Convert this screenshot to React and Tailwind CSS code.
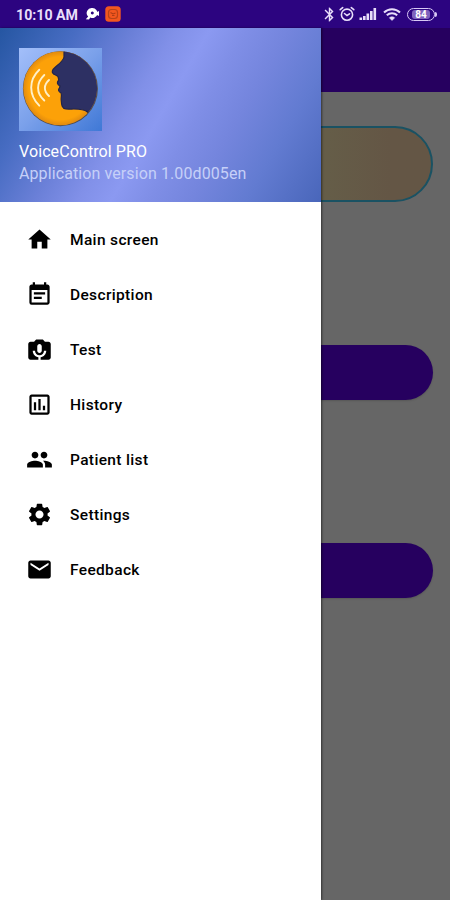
import {
  MdHome, MdEventNote, MdPermCameraMic, MdOutlineInsertChart,
  MdPeople, MdSettings, MdEmail, MdBluetooth
} from 'react-icons/md';

const navItems = [
  { name: 'Main screen', icon: MdHome },
  { name: 'Description', icon: MdEventNote },
  { name: 'Test', icon: MdPermCameraMic },
  { name: 'History', icon: MdOutlineInsertChart },
  { name: 'Patient list', icon: MdPeople },
  { name: 'Settings', icon: MdSettings },
  { name: 'Feedback', icon: MdEmail },
];

function AppLogo() {
  return (
    <svg className="block h-[83px] w-[83px]" viewBox="0 0 83 83">
      <defs>
        <linearGradient id="logoBg" x1="0" y1="0" x2="1" y2="1">
          <stop offset="0" stopColor="#a3bffa" />
          <stop offset="0.5" stopColor="#7aa0ea" />
          <stop offset="1" stopColor="#3f78d6" />
        </linearGradient>
        <radialGradient id="logoOrange">
          <stop offset="0.85" stopColor="#fca108" />
          <stop offset="1" stopColor="#e08a10" />
        </radialGradient>
        <clipPath id="logoClip">
          <circle cx="41.200" cy="40.300" r="37" />
        </clipPath>
      </defs>
      <rect width="83" height="83" fill="url(#logoBg)" />
      <circle cx="41.400" cy="40.700" r="37.500" fill="#4b4a50" />
      <circle cx="41.200" cy="40.300" r="37" fill="url(#logoOrange)" />
      <path
        clipPath="url(#logoClip)"
        fill="#2d3063"
        stroke="#22244a"
        strokeWidth="1.200"
        d="M45 2 L45 9 C44 14 38 17 34 21.500 C32.500 24 33.500 26 36.500 27 C39.500 28 40 30 39.500 32.500 C37.500 34.500 38.500 36.500 41 38 L40.500 40 C38.500 42 40 44 42 45 C43 47 42 49 42.200 52 C42.500 57 43 60.500 47 61 C53 61.500 63 59.500 68.500 64 L83 78 V0 Z"
      />
      <g fill="none" stroke="#fff0c8" strokeLinecap="round">
        <path strokeWidth="1.900" d="M20.300 21.700 C9.500 32 9.500 47 20.300 57.700" />
        <path strokeWidth="1.900" d="M25.300 27 C17 35 17 45 25.300 52.500" />
        <path strokeWidth="1.900" d="M30 32 C24.500 37 24.500 43 30 48" />
      </g>
    </svg>
  );
}

function StatusBar() {
  return (
    <div className="flex h-7 items-center justify-between bg-[#2c0480] pl-4 pr-[13px] text-[#e8defa]">
      <div className="flex items-center">
        <span className="w-[63px] whitespace-nowrap pt-px text-[14.200px] leading-7 font-bold">10:10 AM</span>
        <svg className="ml-[6px] h-[14px] w-[15px]" viewBox="0 0 15 14" fill="#ffffff">
          <path fillRule="evenodd" d="M7.500 1 a5 5 0 1 1 -2.200 9.500 L4 12.500 L0.800 12.300 L3.200 9.500 A5 5 0 0 1 7.500 1 Z M7.300 4.500 a1.500 1.500 0 1 0 0.010 0 Z" />
          <path d="M12 5 L14 4 V9 L12 8 Z" />
        </svg>
        <svg className="ml-[5px] h-4 w-4" viewBox="0 0 16 16" fill="none">
          <rect x="0.300" y="0.300" width="15.400" height="15.400" rx="3.500" fill="#f2571f" />
          <rect x="3.500" y="3.500" width="9" height="9" rx="3" stroke="#b84318" strokeWidth="1.200" />
          <path d="M5.500 6.500 L8 8 L10.500 7 M7 9.500 h2.500" stroke="#b03c14" strokeWidth="1.100" />
        </svg>
      </div>
      <div className="flex items-center">
        <MdBluetooth className="h-[17px] w-[17px]" />
        <svg className="ml-[1px] h-4 w-4" viewBox="0 0 16 16" fill="none" stroke="currentColor" strokeWidth="1.600" strokeLinecap="round">
          <circle cx="8" cy="8.700" r="5.600" />
          <path d="M1.200 3.700 L3.700 1.600 M14.800 3.700 L12.300 1.600" />
          <path d="M5.500 7.500 L8 9.500 L10.500 7.800" />
        </svg>
        <svg className="ml-[4px] h-[14px] w-[18px]" viewBox="0 0 18 14" fill="currentColor">
          <rect x="0.500" y="10.500" width="2.600" height="2.500" />
          <rect x="4" y="9" width="2.600" height="4" />
          <rect x="7.500" y="6.500" width="2.600" height="6.500" />
          <rect x="11" y="4" width="2.600" height="9" />
          <rect x="14.500" y="1" width="2.600" height="12" />
        </svg>
        <svg className="ml-[6px] h-[15px] w-[18px]" viewBox="0 0 18 15" fill="none" stroke="currentColor" strokeWidth="2">
          <path d="M1 5.500 C5.500 1.200 12.500 1.200 17 5.500" />
          <path d="M3.800 8.300 C6.800 5.500 11.200 5.500 14.200 8.300" />
          <path d="M6.300 10.800 C8 9.400 10 9.400 11.700 10.800 L9 13.500 Z" fill="currentColor" strokeWidth="0.500" />
        </svg>
        <div className="ml-[6px] flex h-[13px] w-[28px] items-center justify-center rounded-full border-[1.500px] border-[#d8c9f5]">
          <span className="rounded-[3px] bg-[#7f63bd] px-[3px] text-[10px] leading-[9px] font-bold text-white">84</span>
        </div>
        <div className="h-[5px] w-[2px] rounded-r bg-[#d8c9f5]" />
      </div>
    </div>
  );
}

export default function App() {
  return (
    <div className="relative flex h-[900px] w-[450px] flex-col overflow-hidden bg-[#666666] font-['Roboto',sans-serif]">
      <StatusBar />

      {/* Dimmed screen behind the drawer */}
      <div className="h-16 bg-[#26005f]" />
      <main className="flex flex-col pr-[17px] pl-4">
        <div className="mt-[34px] h-[76px] rounded-full border-2 border-[#1a5263] bg-linear-to-r from-[#655d48] from-75% to-[#645645] to-90%" />
        <div className="mt-[143.400px] h-[55px] rounded-full bg-[#26005f] shadow-[0_1px_2px_rgba(0,0,0,0.15)]" />
        <div className="mt-[143px] h-[55px] rounded-full bg-[#26005f] shadow-[0_1px_2px_rgba(0,0,0,0.15)]" />
      </main>

      {/* Navigation drawer */}
      <aside className="absolute top-7 bottom-0 left-0 w-[321.400px] bg-white shadow-[1px_0_2px_rgba(0,0,0,0.5)]">
        <header className="h-[174px] bg-[linear-gradient(120deg,#2556a2_0%,#476cc2_18%,#6b80d8_32%,#8190e8_42%,#8b99f1_50%,#7f8ee6_59%,#7485dd_69%,#627bd1_82%,#4966ba_100%)] pt-5 pl-[19px]">
          <AppLogo />
          <p className="mt-[10px] text-[16px] leading-[22px] tracking-[0.1px] text-white">VoiceControl PRO</p>
          <p className="text-[16px] leading-[22px] tracking-[0.1px] text-[#c6d0f8]">Application version 1.00d005en</p>
        </header>
        <nav className="pt-[10px]">
          {navItems.map((item) => (
            <a key={item.name} className="flex h-[55px] items-center pl-[26px] text-black">
              <item.icon className="h-[27px] w-[27px]" />
              <span className="ml-[17px] pt-[2px] text-[15.500px] font-medium tracking-[0.350px]">{item.name}</span>
            </a>
          ))}
        </nav>
      </aside>
    </div>
  );
}
